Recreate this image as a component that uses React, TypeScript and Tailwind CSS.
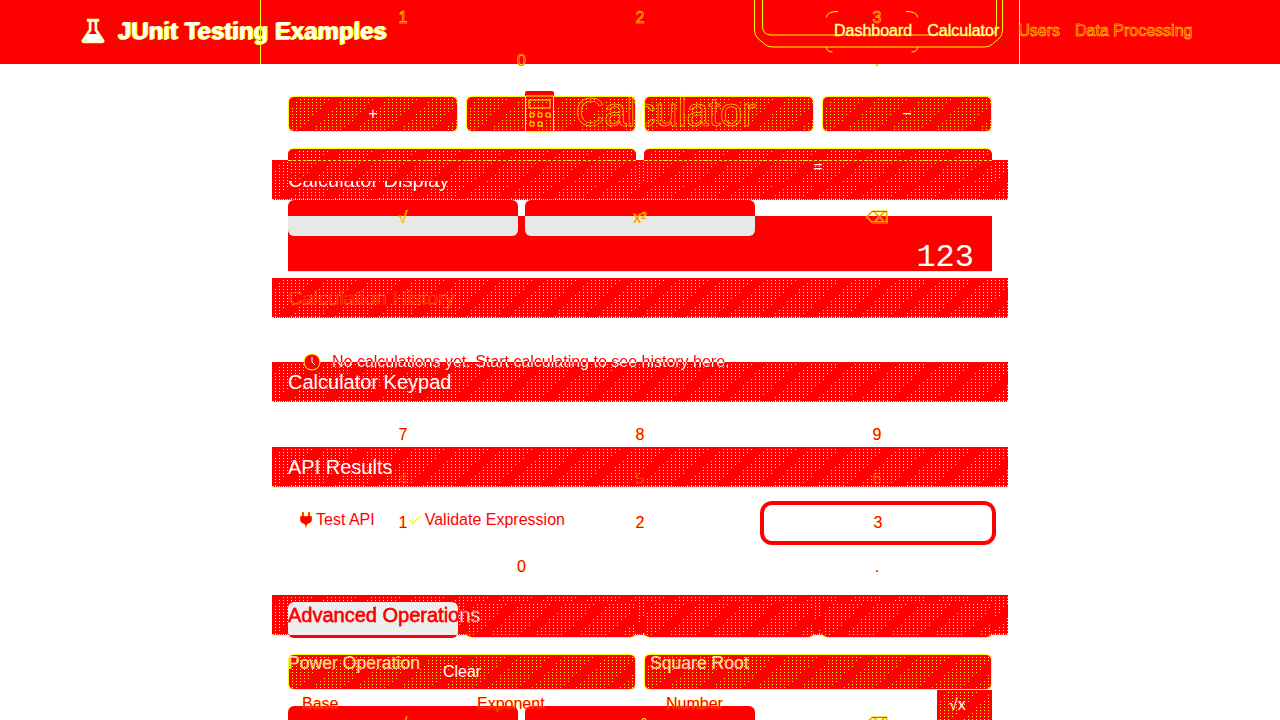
import React from "react";
import { Check } from "lucide-react";

const dither =
  "[background:repeating-linear-gradient(135deg,#f00_0_9px,transparent_9px_31px),linear-gradient(90deg,#f00_3px,transparent_3px)_0_0/4px_3px,linear-gradient(#f00_2px,#ff0_2px)_0_0/4px_3px]";
const outlineText = "text-transparent [-webkit-text-stroke:0.5px_#ff0]";
const faintText = "text-transparent [-webkit-text-stroke:0.2px_#ff0]";
const halfWhite = "bg-[linear-gradient(#f00_55%,#fff_55%)] bg-clip-text text-transparent";

function Bar({ children }: { children?: React.ReactNode }) {
  return (
    <div className={`flex h-10 items-center border-b border-dotted border-[#ff0] px-4 text-[20px] ${dither}`}>
      {children}
    </div>
  );
}

function Key({ children, cls = "" }: { children?: React.ReactNode; cls?: string }) {
  return <div className={`flex h-9 items-center justify-center text-base ${cls}`}>{children}</div>;
}

function DitherKey({ children }: { children?: React.ReactNode }) {
  return (
    <div className={`flex h-9 items-center justify-center rounded-[6px] border border-[#ff0] text-base text-white ${dither}`}>
      {children}
    </div>
  );
}

function TopKey({ children }: { children?: React.ReactNode }) {
  return (
    <div className={`relative flex h-9 items-center justify-center rounded-t-[6px] border-t border-[#ff0] text-base text-white ${dither}`}>
      <div className="absolute inset-x-0 top-[11px] border-t border-dashed border-[#ff0]" />
      {children}
    </div>
  );
}

function BottomKey() {
  return <div className={`h-9 rounded-b-[6px] border-b border-[#ff0] ${dither}`} />;
}

const redDigit = "text-[#f00] [text-shadow:0_0_1px_#ff0]";
const stroked = "text-[#f00] [-webkit-text-stroke:0.5px_#ff0]";

export default function App() {
  return (
    <div className="grid h-[720px] w-[1280px] overflow-hidden bg-white font-['Liberation_Sans',Arial,sans-serif]">
      {/* page layer */}
      <div className="[grid-area:1/1]">
        <header className="flex h-16 items-center bg-[#f00] pb-[2px] pl-[81px]">
          <svg viewBox="0 0 24 26" className="h-[26px] w-[24px]">
            <path d="M6 1h12v2.500h-2v8l7 10.500c.8 1.600 0 3-2 3H3c-2 0-2.800-1.400-2-3l7-10.500v-8H6z" fill="#fff" stroke="#ff0" strokeWidth="0.6" />
            <path d="M10.500 4h3v8.500l2.500 3.500H8l2.500-3.500z" fill="#f00" />
          </svg>
          <span className="ml-[13px] text-2xl font-bold text-white [text-shadow:1px_0_0_#ff0,-1px_1px_0_#ff0]">JUnit Testing Examples</span>
          <nav className="relative z-10 ml-[447px] flex gap-[15px] text-base leading-5">
            <span className="text-white [-webkit-text-stroke:0.4px_#ff0]">Dashboard</span>
            <span className="text-white [-webkit-text-stroke:0.4px_#ff0]">Calculator</span>
            <span className={`ml-1 ${stroked}`}>Users</span>
            <span className={stroked}>Data Processing</span>
          </nav>
        </header>
        <main className="mx-auto w-[736px]">
          <div className="flex h-[96px] items-start justify-center pt-[27px]">
            <div className="relative z-10 flex items-center gap-[19px]">
              <svg viewBox="0 0 32 42" className="h-[42px] w-8">
                <rect x="1" y="0" width="29" height="6" rx="2" fill="#f00" />
                <rect x="1.500" y="5" width="28" height="36" rx="1" fill="none" stroke="#ff0" />
                <rect x="5" y="9" width="21" height="8" fill="none" stroke="#ff0" />
                <path d="M6 22h4v4H6zM14 22h4v4h-4zM22 22h4v4h-4zM6 31h4v4H6zM14 31h4v4h-4z" fill="none" stroke="#ff0" />
              </svg>
              <h1 className={`text-[40px] leading-10 font-normal ${outlineText}`}>Calculator</h1>
            </div>
          </div>
          <Bar><span className={`relative z-10 ${halfWhite}`}>Calculator Display</span></Bar>
          <div className="h-[78px] px-4 pt-4">
            <div className="flex h-14 items-end justify-end border-b border-[#ff0] bg-[#f00] pr-[18px]">
              <span className="relative z-10 font-['Liberation_Mono',monospace] text-[32px] leading-[26px] text-white">123</span>
            </div>
          </div>
          <Bar><span className={`relative z-10 ${faintText}`}>Calculation History</span></Bar>
          <div className="h-[44px] pt-[34px] pl-[31px]">
            <div className="relative z-10 flex items-center gap-[11px]">
              <svg viewBox="0 0 18 18" className="h-[18px] w-[18px]">
                <circle cx="9" cy="9" r="8" fill="#f00" stroke="#ff0" strokeWidth="1" />
                <path d="M9 4v5l3 3" fill="none" stroke="#fff" />
              </svg>
              <span className="bg-[linear-gradient(#f00_50%,#fff_50%)] bg-clip-text text-base leading-5 text-transparent">
                No calculations yet. Start calculating to see history here.
              </span>
            </div>
          </div>
          <Bar><span className="relative z-10 text-white">Calculator Keypad</span></Bar>
          <div className="h-[45px]" />
          <Bar><span className="relative z-10 text-white">API Results</span></Bar>
          <div className="h-[108px] pt-[23px] pl-7">
            <div className="relative z-10 flex items-center text-base leading-5 text-[#f00]">
              <svg viewBox="0 0 12 16" className="mr-1 h-4 w-3">
                <path d="M2 0h2v4h4V0h2v4h2v4c0 2-2 3.500-4.500 4L6 16l-1.500-4C2 11.500 0 10 0 8V4h2z" fill="#f00" stroke="#ff0" strokeWidth="0.500" />
              </svg>
              <span>Test API</span>
              <Check className="mr-[2px] ml-8 text-[#ff0]" size={16} strokeWidth={2} />
              <span>Validate Expression</span>
            </div>
          </div>
          <Bar>
            <span className="relative z-10 bg-[linear-gradient(90deg,#f00_170px,#fff_170px)] bg-clip-text text-transparent [-webkit-text-stroke:0.4px_#f00]">
              Advanced Operations
            </span>
          </Bar>
          <div className="h-[18px]" />
          <div className="relative z-10 flex h-5 items-center pl-4 text-[17.600px] text-white/80">
            <span className="w-[362px] [-webkit-text-stroke:0.2px_#ff0]">Power Operation</span>
            <span className="[-webkit-text-stroke:0.2px_#ff0]">Square Root</span>
          </div>
          <div className="relative z-10 flex h-[40px] pt-[21px] pl-[30px] text-base text-[#f00] [text-shadow:0_0_1px_#ff0]">
            <span className="w-[175px] leading-5">Base</span>
            <span className="w-[189px] leading-5">Exponent</span>
            <span className="leading-5">Number</span>
          </div>
        </main>
      </div>

      {/* keypad layer */}
      <div className="relative z-[5] ml-[288px] w-[704px] [grid-area:1/1]">
        <div className="grid h-[35px] grid-cols-3 gap-x-[7px]">
          <Key cls={stroked}>1</Key>
          <Key cls={stroked}>2</Key>
          <Key cls={stroked}>3</Key>
        </div>
        <div className="mt-[8px] grid grid-cols-3 gap-x-[7px]">
          <div className="col-span-2"><Key cls={stroked}>0</Key></div>
          <Key cls={stroked}>.</Key>
        </div>
        <div className="mt-[17px] grid grid-cols-4 gap-2">
          <DitherKey>+</DitherKey>
          <DitherKey />
          <DitherKey />
          <DitherKey>−</DitherKey>
        </div>
        <div className="mt-4 grid grid-cols-2 gap-2">
          <TopKey />
          <TopKey>=</TopKey>
        </div>
        <div className="mt-4 grid grid-cols-3 gap-x-[7px]">
          <div className={`flex h-9 items-center justify-center rounded-[6px] bg-[linear-gradient(#f00_16px,#e8e8e8_16px)] ${stroked}`}>√</div>
          <div className={`flex h-9 items-center justify-center rounded-[6px] bg-[linear-gradient(#f00_16px,#e8e8e8_16px)] ${stroked}`}>x²</div>
          <div className={`flex h-9 items-center justify-center ${stroked}`}>⌫</div>
        </div>

        <div className="mt-[181px] grid grid-cols-3 gap-x-[7px]">
          <Key cls={redDigit}>7</Key>
          <Key cls={redDigit}>8</Key>
          <Key cls={redDigit}>9</Key>
        </div>
        <div className="mt-2 grid grid-cols-3 gap-x-[7px]">
          <Key cls={faintText}>4</Key>
          <Key cls={faintText}>5</Key>
          <Key cls={faintText}>6</Key>
        </div>
        <div className="mt-2 grid grid-cols-3 gap-x-[7px]">
          <Key cls={redDigit}>1</Key>
          <Key cls={redDigit}>2</Key>
          <Key cls={`${redDigit} ml-[2px] rounded-[8px] ring-[4px] ring-[#f00]`}>3</Key>
        </div>
        <div className="mt-2 grid grid-cols-3 gap-x-[7px]">
          <div className="col-span-2"><Key cls={redDigit}>0</Key></div>
          <Key cls={redDigit}>.</Key>
        </div>
        <div className="mt-[17px] grid grid-cols-4 gap-2">
          <div className="h-9 rounded-[6px] bg-[linear-gradient(#eee_33px,#f00_33px)]" />
          <BottomKey />
          <BottomKey />
          <BottomKey />
        </div>
        <div className="mt-4 grid grid-cols-2 gap-2">
          <DitherKey>Clear</DitherKey>
          <DitherKey />
        </div>
        <div className="mt-4 grid grid-cols-3 gap-x-[7px]">
          <div className="flex h-9 items-center justify-center rounded-[6px] bg-[#f00] text-[#ff0]">√</div>
          <div className="flex h-9 items-center justify-center rounded-[6px] bg-[#f00] text-[#ff0]">x²</div>
          <div className={`flex h-9 items-center justify-center ${stroked}`}>⌫</div>
        </div>
      </div>

      {/* outlines over the header, and the clipped button at the lower right */}
      <div className="pointer-events-none relative z-[6] flex h-[720px] flex-col [grid-area:1/1]">
        <svg viewBox="0 0 1280 64" className="h-16 w-[1280px]" fill="none" stroke="#ff0">
          <path d="M260.500 0v64M1019.500 0v64" />
          <path d="M754.500 0v30q0 6 4 9l6 5q3 3 8 3h212q5 0 8-3l6-5q4-3 4-9V0" />
          <path d="M762.500 0v26q0 9 9 9h216q9 0 9-9V0" />
          <path d="M838 11.500q-11.500 0-11.500 6M826.500 47q0 5 6 5M906 11.500q11.500 0 11.500 6M917.500 47q0 5-6 5" />
        </svg>
        <div className={`mt-[626px] ml-[937px] flex h-[30px] w-[55px] items-center pl-3 text-base text-white ${dither}`}>√x</div>
      </div>
    </div>
  );
}
